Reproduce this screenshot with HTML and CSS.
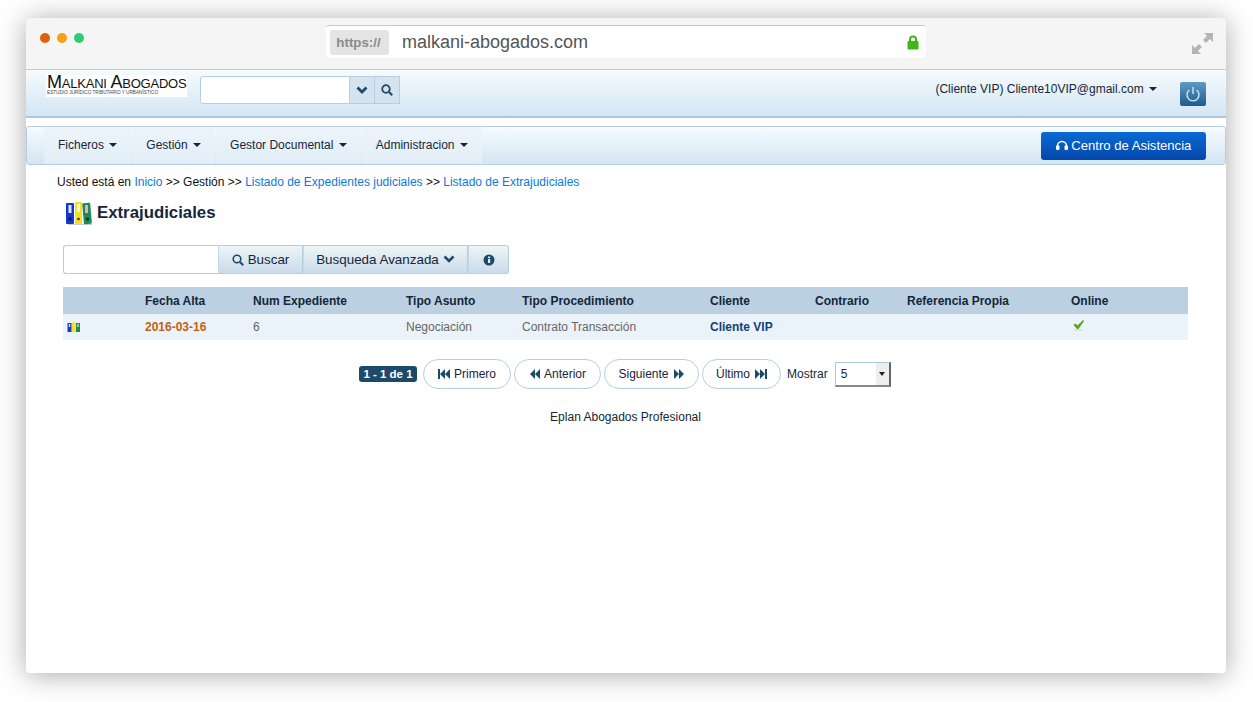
FILE: index.html
```html
<!DOCTYPE html>
<html lang="es">
<head>
    <meta charset="UTF-8">
    <title>Extrajudiciales</title>
    <link rel="stylesheet" href="styles.css">
</head>
<body>
<div class="window">
    <div class="chrome">
        <div class="dots">
            <span class="dot dot-red"></span>
            <span class="dot dot-amber"></span>
            <span class="dot dot-green"></span>
        </div>
        <div class="address">
            <span class="scheme">https://</span>
            <span class="url">malkani-abogados.com</span>
            <svg class="lock" width="12" height="15" viewBox="0 0 12 15"><path d="M3 7V4.500a3 3 0 0 1 6 0V7" fill="none" stroke="#3fb618" stroke-width="2"/><rect x="0.500" y="6" width="11" height="8.500" rx="1" fill="#3fb618"/></svg>
        </div>
        <svg class="expand" width="21" height="21" viewBox="0 0 21 21"><path d="M12 0h9v9l-3-3-4 4-3-3 4-4zM0 12l3 3 4-4 3 3-4 4 3 3H0z" fill="#b4b4b4"/></svg>
    </div>

    <header class="topbar">
        <div class="logo">
            <span class="logo-name">Malkani Abogados</span>
            <span class="logo-sub">ESTUDIO JURÍDICO TRIBUTARIO Y URBANÍSTICO</span>
        </div>
        <div class="top-search">
            <input class="top-input" type="text">
            <span class="top-btn"><svg width="12" height="9" viewBox="0 0 12 9"><path d="M1.500 1.500 6 6l4.500-4.500" fill="none" stroke="#1d4a6b" stroke-width="2.800"/></svg></span>
            <span class="top-btn"><svg width="12" height="12" viewBox="0 0 12 12"><circle cx="5" cy="5" r="3.800" fill="none" stroke="#1d4a6b" stroke-width="1.800"/><path d="m8 8 3.200 3.200" stroke="#1d4a6b" stroke-width="2.200"/></svg></span>
        </div>
        <div class="user">(Cliente VIP) Cliente10VIP@gmail.com <span class="caret"></span></div>
        <span class="power"><svg width="16" height="16" viewBox="0 0 16 16"><path d="M4.500 4a6 6 0 1 0 7 0M8 1v7" fill="none" stroke="#cfe6f5" stroke-width="1.400"/></svg></span>
    </header>

    <nav class="menu">
        <a class="menu-item">Ficheros <span class="caret"></span></a>
        <a class="menu-item">Gestión <span class="caret"></span></a>
        <a class="menu-item">Gestor Documental <span class="caret"></span></a>
        <a class="menu-item">Administracion <span class="caret"></span></a>
        <a class="help"><svg width="12" height="10" viewBox="0 0 12 10"><path d="M1.500 7V6a4.500 4.500 0 0 1 9 0v1" fill="none" stroke="#fff" stroke-width="1.600"/><rect x="0" y="5.500" width="3.500" height="4.500" rx="1" fill="#fff"/><rect x="8.500" y="5.500" width="3.500" height="4.500" rx="1" fill="#fff"/></svg> Centro de Asistencia</a>
    </nav>

    <main class="content">
        <div class="crumbs">Usted está en <a>Inicio</a> &gt;&gt; Gestión &gt;&gt; <a>Listado de Expedientes judiciales</a> &gt;&gt; <a>Listado de Extrajudiciales</a></div>

        <h1 class="title">
            <svg width="28" height="24" viewBox="0 0 28 24">
                <path d="M3 23h24v1H3z" fill="#c8ccd0"/>
                <rect x="1" y="2" width="8" height="21" rx="1" fill="#1438c8"/><rect x="10" y="1" width="7" height="22" rx="1" fill="#f4e01c"/><rect x="18" y="2" width="8" height="21" rx="1" fill="#1d8a5c" transform="rotate(-5 22 12)"/>
                <rect x="3.500" y="4" width="3" height="8" fill="#dfe6f5"/><rect x="12" y="3" width="3" height="8" fill="#f5f5f5"/><rect x="20" y="4" width="3" height="8" fill="#e8b0a0"/>
                <circle cx="5" cy="18" r="1.700" fill="#0c1c50"/><circle cx="13.500" cy="18" r="1.300" fill="#333"/><circle cx="22.500" cy="18" r="1.700" fill="#0c3c28"/>
            </svg>
            Extrajudiciales
        </h1>

        <div class="filter">
            <input class="filter-input" type="text">
            <span class="filter-btn filter-buscar"><svg width="12" height="12" viewBox="0 0 12 12"><circle cx="5" cy="5" r="3.800" fill="none" stroke="#1d4a6b" stroke-width="1.600"/><path d="m8 8 3.200 3.200" stroke="#1d4a6b" stroke-width="2"/></svg> Buscar</span>
            <span class="filter-btn filter-avanzada">Busqueda Avanzada <svg width="12" height="9" viewBox="0 0 12 9"><path d="M1.500 1.500 6 6l4.500-4.500" fill="none" stroke="#1d4a6b" stroke-width="2.600"/></svg></span>
            <span class="filter-btn filter-info"><svg width="12" height="12" viewBox="0 0 12 12"><circle cx="6" cy="6" r="5.500" fill="#1d4a6b"/><rect x="5" y="5" width="2.200" height="4" fill="#e6eef5"/><rect x="5" y="2.500" width="2.200" height="1.600" fill="#e6eef5"/></svg></span>
        </div>

        <div class="grid-row grid-head">
            <span></span><span>Fecha Alta</span><span>Num Expediente</span><span>Tipo Asunto</span><span>Tipo Procedimiento</span><span>Cliente</span><span>Contrario</span><span>Referencia Propia</span><span>Online</span>
        </div>
        <div class="grid-row grid-body">
            <span><svg class="row-icon" width="14" height="11" viewBox="0 0 14 11"><rect x="0.500" y="1" width="4" height="9" fill="#1438c8"/><rect x="5" y="0.500" width="3.500" height="9.500" fill="#f4e01c"/><rect x="9" y="1" width="4" height="9" fill="#1d8a5c"/><rect x="1.800" y="2" width="1.400" height="3" fill="#dfe6f5"/><rect x="10.300" y="2" width="1.400" height="3" fill="#f0d0c0"/></svg></span>
            <span class="date">2016-03-16</span><span>6</span><span>Negociación</span><span>Contrato Transacción</span><span class="client">Cliente VIP</span><span></span><span></span>
            <span><svg class="check" width="12" height="11" viewBox="0 0 12 11"><path d="M1 9.500h8v1H1z" fill="#c9d0c9"/><path d="M0.500 5 2.500 3.500 4.500 5.500 10 0l1 1-5.500 8H4z" fill="#5aa51e"/></svg></span>
        </div>

        <div class="pager">
            <span class="count">1 - 1 de 1</span>
            <a class="page-btn page-first"><svg width="12" height="10" viewBox="0 0 12 10"><path d="M0 0h2v10H0zM7 0v10L2 5zM12 0v10L7 5z" fill="#1d4a6b"/></svg> Primero</a>
            <a class="page-btn page-prev"><svg width="11" height="10" viewBox="0 0 11 10"><path d="M6 0v10L1 5zM11 0v10L6 5z" fill="#1d4a6b"/></svg> Anterior</a>
            <a class="page-btn page-next">Siguiente <svg width="11" height="10" viewBox="0 0 11 10"><path d="M0 0v10l5-5zM5 0v10l5-5z" fill="#1d4a6b"/></svg></a>
            <a class="page-btn page-last">Último <svg width="12" height="10" viewBox="0 0 12 10"><path d="M0 0v10l5-5zM5 0v10l5-5zM10 0h2v10h-2z" fill="#1d4a6b"/></svg></a>
            <span class="show-label">Mostrar</span>
            <span class="select"><span class="select-value">5</span><span class="select-arrow"></span></span>
        </div>

        <p class="footer">Eplan Abogados Profesional</p>
    </main>
</div>
</body>
</html>
```

FILE: styles.css
```css
* {
    box-sizing: border-box;
}
html, body {
    margin: 0;
    height: 702px;
    overflow: hidden;
    background: #fff;
}
body {
    font-family: "Liberation Sans", Arial, sans-serif;
    font-size: 12px;
    color: #14263a;
    padding: 18px 27px 0 26px;
}
a {
    text-decoration: none;
}
.window {
    height: 655px;
    background: #fff;
    border-radius: 4px;
    box-shadow: 0 2px 28px rgba(0, 0, 0, .34);
    overflow: hidden;
}

/* browser bar */
.chrome {
    height: 51px;
    background: #f5f5f5;
    display: flex;
    align-items: flex-start;
    padding: 7px 13px 0 14px;
}
.dots {
    display: flex;
    gap: 7px;
    width: 286px;
    padding-top: 8px;
}
.dot {
    width: 10px;
    height: 10px;
    border-radius: 50%;
}
.dot-red { background: #e0600c; }
.dot-amber { background: #f4a211; }
.dot-green { background: #2ecc71; }
.address {
    width: 600px;
    height: 33px;
    background: #fff;
    border-top: 1px solid #c8c8c8;
    border-radius: 3px;
    display: flex;
    align-items: center;
    padding: 0 7px 0 4px;
}
.scheme {
    width: 59px;
    height: 25px;
    padding-right: 2px;
    background: #e4e4e4;
    border-radius: 3px;
    color: #8a8a8a;
    font-weight: bold;
    font-size: 13.300px;
    text-align: center;
    line-height: 25px;
}
.url {
    margin-left: 13px;
    font-size: 18px;
    color: #555;
    flex: 1;
}
.expand {
    margin-left: auto;
    margin-top: 8px;
}

/* top bar */
.topbar {
    height: 49px;
    background: linear-gradient(#f6fbfe, #d3e5f4);
    border-top: 1px solid #b4cfe3;
    border-bottom: 2px solid #a9c8de;
    display: flex;
    align-items: flex-start;
    padding: 5px 20px 0 20px;
}
.logo {
    width: 141px;
    height: 22px;
    background: #fff;
    padding-left: 1px;
    color: #111;
}
.logo-name {
    display: block;
    font-variant: small-caps;
    font-size: 18px;
    line-height: 15px;
    letter-spacing: -.22px;
    white-space: nowrap;
}
.logo-sub {
    display: block;
    font-size: 4.700px;
    line-height: 6px;
    color: #444;
    white-space: nowrap;
}
.top-search {
    display: flex;
    margin-left: 13px;
    margin-top: 1px;
    height: 28px;
}
.top-input {
    width: 150px;
    height: 28px;
    border: 1px solid #b4cfe3;
    border-radius: 3px 0 0 3px;
    background: #fff;
}
.top-btn {
    width: 25px;
    height: 28px;
    background: #d5e3ee;
    border: 1px solid #b4cfe3;
    border-left: 0;
    display: flex;
    align-items: center;
    justify-content: center;
}
.user {
    margin-left: auto;
    margin-top: 7px;
    color: #14263a;
    white-space: nowrap;
}
.caret {
    display: inline-block;
    width: 0;
    height: 0;
    margin-left: 2px;
    vertical-align: 2px;
    border-left: 4px solid transparent;
    border-right: 4px solid transparent;
    border-top: 4px solid #14263a;
}
.power {
    margin-left: 23px;
    margin-top: 7px;
    width: 26px;
    height: 24px;
    border-radius: 2px;
    background: linear-gradient(#5f9ac6, #1f5c8c);
    display: flex;
    align-items: center;
    justify-content: center;
}

/* main menu */
.menu {
    margin-top: 8px;
    height: 39px;
    background: linear-gradient(#f6fbfe, #d3e5f4);
    border: 1px solid #b4cfe3;
    border-radius: 3px;
    display: flex;
    padding-left: 17px;
    padding-right: 19px;
    align-items: stretch;
}
.menu-item {
    background: linear-gradient(#edf5fb, #e2edf7);
    color: #14263a;
    padding: 11px 14px 0;
    margin-right: 1px;
    white-space: nowrap;
}
.help {
    margin: 5px 0 4px auto;
    width: 165px;
    background: linear-gradient(#0b6ad4, #0447ad);
    border-radius: 3px;
    color: #fff;
    font-size: 13.100px;
    text-align: center;
    line-height: 28px;
}

/* page */
.content {
    padding: 10px 38px 0 37px;
}
.crumbs {
    margin-left: -6px;
    color: #111;
    line-height: 14px;
}
.crumbs a {
    color: #0a7ae0;
}
.title {
    margin: 11px 0 0 2px;
    height: 26px;
    font-size: 16.800px;
    display: flex;
    align-items: center;
    gap: 4px;
    color: #14263a;
}
.filter {
    margin-top: 19px;
    display: flex;
    height: 29px;
}
.filter-input {
    width: 155px;
    height: 29px;
    border: 1px solid #b4cfe3;
    border-right: 0;
    border-radius: 3px 0 0 3px;
    background: #fff;
}
.filter-btn {
    height: 29px;
    background: linear-gradient(#eef4f8, #c9dcea);
    border: 1px solid #b4cfe3;
    border-left-color: #c5d8e6;
    font-size: 13.400px;
    display: flex;
    align-items: center;
    justify-content: center;
    gap: 4px;
    white-space: nowrap;
}
.filter-buscar { width: 85px; }
.filter-avanzada { width: 165px; }
.filter-info {
    width: 41px;
    border-radius: 0 3px 3px 0;
}

/* table */
.grid-row {
    display: grid;
    grid-template-columns: 82px 108px 153px 116px 188px 105px 92px 164px 117px;
    align-items: center;
}
.grid-head {
    margin-top: 13px;
    height: 27px;
    background: #bbd0e0;
    font-weight: bold;
    color: #14263a;
}
.grid-body {
    height: 26px;
    background: #ebf3fa;
    color: #666;
}
.row-icon {
    display: block;
    margin-left: 4px;
}
.date {
    color: #c4610a;
    font-weight: bold;
}
.client {
    color: #123f7a;
    font-weight: bold;
}
.check {
    display: block;
    margin-left: 2px;
    margin-top: -3px;
}

/* pagination */
.pager {
    margin-top: 19px;
    display: flex;
    align-items: center;
    height: 30px;
    padding-left: 296px;
}
.count {
    width: 58px;
    height: 16px;
    margin-right: 6px;
    background: #1d4a6b;
    border-radius: 3px;
    color: #fff;
    font-size: 11.500px;
    font-weight: bold;
    text-align: center;
    line-height: 16px;
    white-space: nowrap;
}
.page-btn {
    height: 30px;
    margin-right: 3px;
    border: 1px solid #b4cfe3;
    border-radius: 15px;
    color: #14263a;
    display: flex;
    align-items: center;
    justify-content: center;
    gap: 4px;
}
.page-first { width: 88px; }
.page-prev { width: 87px; }
.page-next { width: 95px; gap: 5px; }
.page-last { width: 79px; gap: 5px; }
.show-label {
    margin-left: 3px;
}
.select {
    margin-left: 7px;
    width: 56px;
    height: 25px;
    border: 1px solid #a9c8de;
    border-right: 2px solid #666;
    border-bottom: 2px solid #888;
    display: flex;
    align-items: center;
    justify-content: space-between;
    padding-left: 5px;
}
.select-arrow {
    width: 13px;
    height: 100%;
    background: #eee;
    position: relative;
}
.select-arrow::after {
    content: "";
    position: absolute;
    left: 3px;
    top: 9px;
    border-left: 3px solid transparent;
    border-right: 3px solid transparent;
    border-top: 4px solid #222;
}
.footer {
    margin: 21px 0 0;
    text-align: center;
    color: #14263a;
    line-height: 15px;
}
```
